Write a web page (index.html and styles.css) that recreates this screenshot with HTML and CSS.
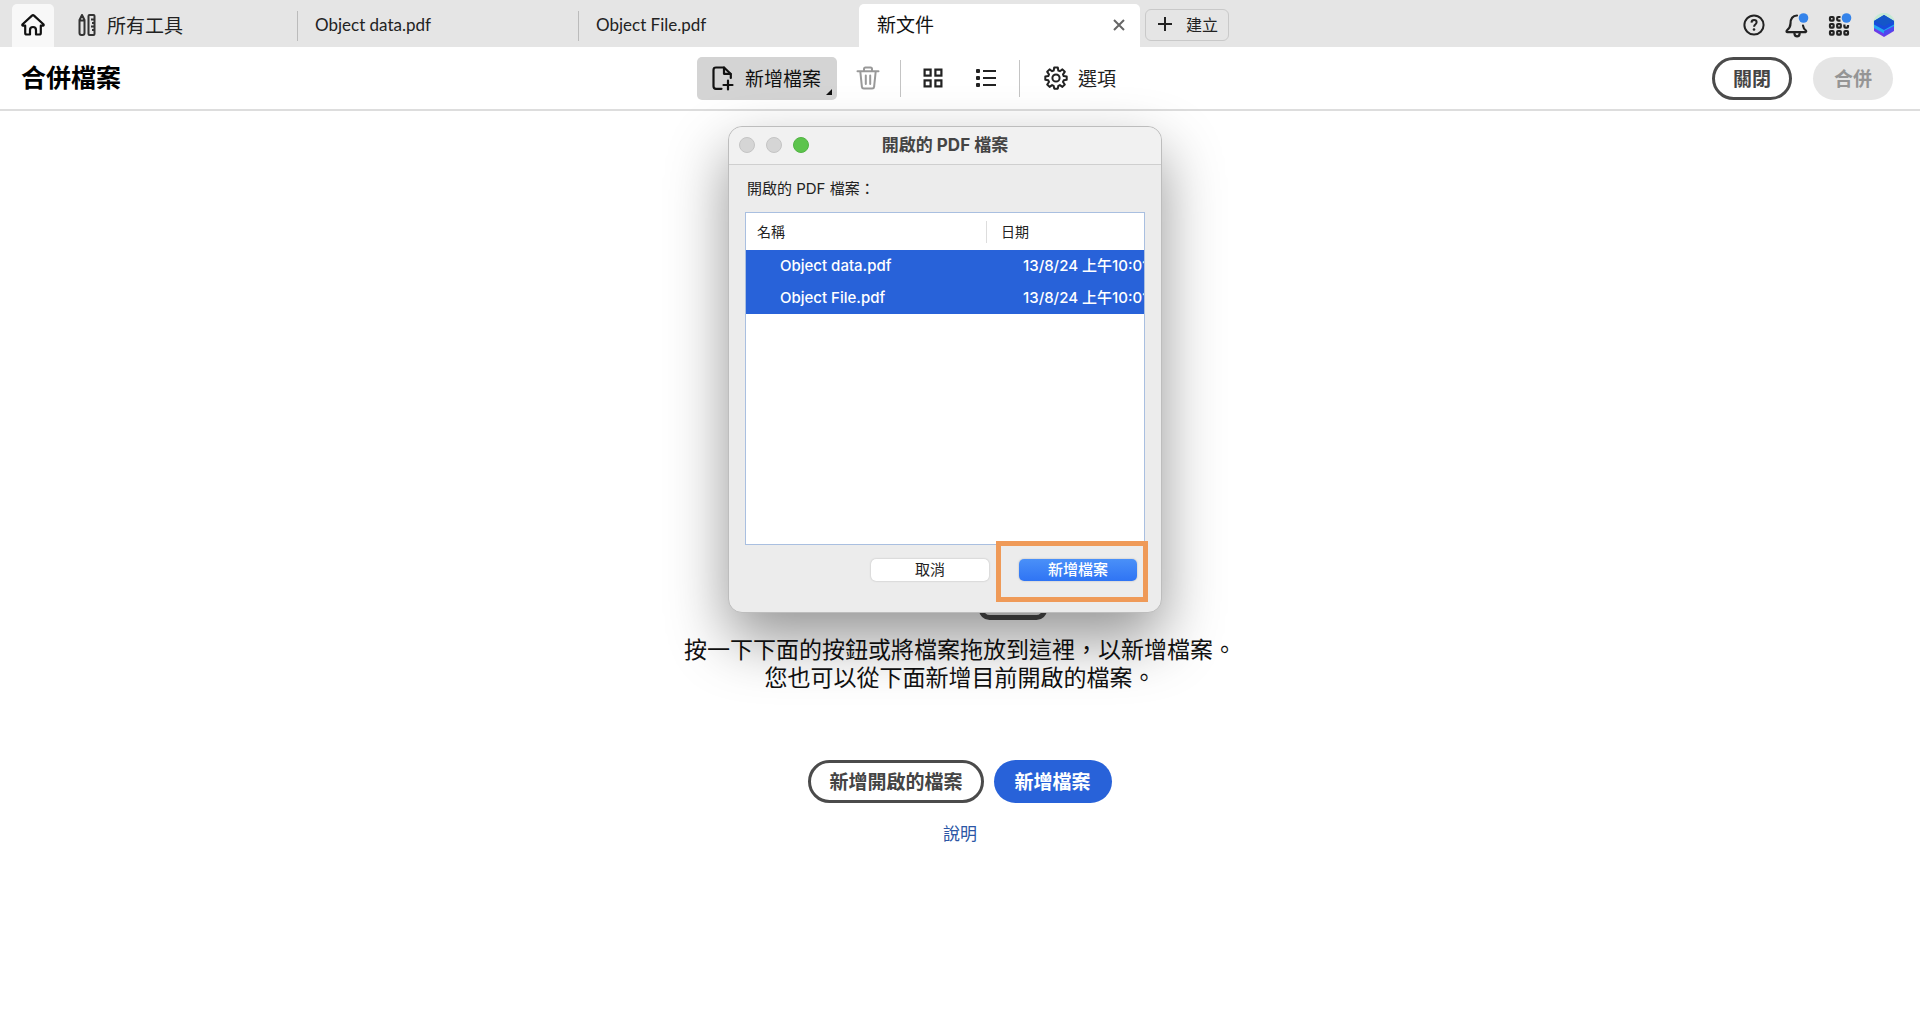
FILE: index.html
```
<!DOCTYPE html>
<html lang="zh-Hant">
<head>
	<meta charset="utf-8">
	<title>合併檔案</title>
	<link rel="stylesheet" href="styles.css">
</head>
<body>

<header class="tabbar">
	<div class="tabbar-left">
		<button class="home" aria-label="首頁">
			<svg width="24" height="24" viewBox="0 0 24 24" fill="none" stroke="#111" stroke-width="2.2" stroke-linejoin="round" stroke-linecap="round"><path d="M1.6 11.3 11 2.6q1-.9 2 0l9.400 8.700q.8 1-.4 1.400H19.800V20q0 1.500-1.500 1.500H15V17q0-3-3-3t-3 3v4.500H5.700Q4.200 21.500 4.200 20v-7.300H2q-1.200-.4-.4-1.400Z"/></svg>
		</button>
		<button class="all-tools">
			<svg width="18" height="22" viewBox="0 0 18 22" fill="none" stroke="#333" stroke-width="2" stroke-linejoin="round"><path d="M1.500 6 4 1l2.500 5v13q0 2-2 2h-1q-2 0-2-2ZM1.500 6.500h5M11.500 1h4q1 0 1 1v18q0 1-1 1h-4q-1 0-1-1V2q0-1 1-1ZM13 5.500h3.500M14 9h2.500M13 12.500h3.500M14 16h2.500"/></svg>
			所有工具
		</button>
	</div>
	<nav class="tabs">
		<button class="tab">Object data.pdf</button>
		<button class="tab">Object File.pdf</button>
		<div class="tab active">新文件
			<button class="close" aria-label="關閉索引標籤">
				<svg width="12" height="12" viewBox="0 0 12 12" stroke="#666" stroke-width="2"><path d="M1 1l10 10M11 1 1 11"/></svg>
			</button>
		</div>
	</nav>
	<button class="create">
		<svg width="14" height="14" viewBox="0 0 14 14" stroke="#222" stroke-width="2"><path d="M7 0v14M0 7h14"/></svg>
		建立
	</button>
	<div class="account">
		<button aria-label="說明">
			<svg width="24" height="24" viewBox="0 0 24 24" fill="none" stroke="#222" stroke-width="2"><circle cx="12" cy="12" r="9.600"/><path d="M9.500 9.600q.1-2.500 2.600-2.500t2.500 2.200q0 1.200-1.300 2.200-1.200.9-1.200 2.200"/><circle cx="12" cy="16.500" r="1.300" fill="#222" stroke="none"/></svg>
		</button>
		<button aria-label="通知">
			<svg width="24" height="26" viewBox="0 0 24 26" fill="none" stroke="#222" stroke-width="2.200" stroke-linecap="round" stroke-linejoin="round"><path d="M12 3.500Q5.500 4 5.500 11.500q0 4-3.700 7-.8 1.600.7 1.600h18q1.200-.4.400-1.600-2.600-2-2.900-5M9.500 20.500v1.500q.4 2.300 2.600 2.300t2.500-2.300v-1.500"/><circle cx="18.500" cy="6" r="4.800" fill="#3483ea" stroke="none"/></svg>
		</button>
		<button aria-label="應用程式">
			<svg width="24" height="26" viewBox="0 0 24 26" fill="none" stroke="#222" stroke-width="2.200"><rect x="2" y="5" width="3.600" height="3.600" rx=".8"/><path d="M12.500 5h-2.300q-1 0-1 1v1.600q0 1 1 1h2.300"/><rect x="2" y="12" width="3.600" height="3.600" rx=".8"/><rect x="9.200" y="12" width="3.600" height="3.600" rx=".8"/><path d="M16.400 12.500v2q0 1.100 1.100 1.100H19q1 0 1-1.100v-1.500"/><rect x="2" y="19" width="3.600" height="3.600" rx=".8"/><rect x="9.200" y="19" width="3.600" height="3.600" rx=".8"/><rect x="16.400" y="19" width="3.600" height="3.600" rx=".8"/><circle cx="18.500" cy="6" r="4.800" fill="#3483ea" stroke="none"/></svg>
		</button>
		<button aria-label="帳戶">
			<svg width="26" height="26" viewBox="0 0 26 26"><circle cx="13" cy="12" r="11" fill="#a9efc4" opacity=".55"/><path d="M3 14v5l10 6 10-6v-5l-10 5Z" fill="#6c3be8"/><path d="M3 11v5l10 5.500L23 16v-5l-10 5Z" fill="#22a7f2"/><path d="M13 3 23 9v3.500L13 18 3 12.500V9Z" fill="#174bdc"/><path d="M13 3 23 9l-10 5.500L3 9Z" fill="#1456c9"/><path d="m13 19 10-5v4l-10 6Z" fill="#4c48ef"/></svg>
		</button>
	</div>
</header>

<div class="toolbar">
	<h1>合併檔案</h1>
	<div class="tools">
		<button class="add-files">
			<svg width="22" height="25" viewBox="0 0 22 25" fill="none" stroke="#111" stroke-width="2.200" stroke-linejoin="round" stroke-linecap="round"><path d="M9.500 22.800H4q-2.500 0-2.500-2.500V4Q1.500 1.500 4 1.500h8L18.800 8v4"/><path d="M12 1.500v6.300h6.500M16 14.500v9M11.500 19h9"/></svg>
			新增檔案
			<span class="corner"></span>
		</button>
		<button class="icon-btn trash" aria-label="刪除">
			<svg width="24" height="24" viewBox="0 0 24 24" fill="none" stroke="#999" stroke-width="2" stroke-linejoin="round" stroke-linecap="round"><path d="M1.500 5.200h21M8 5V3q0-1.500 1.500-1.500h5Q16 1.500 16 3v2M4.300 5.500l1.600 15.300q.2 1.700 1.900 1.700h8.400q1.700 0 1.900-1.700l1.600-15.300M9.800 9.500v8.500M14.200 9.500v8.500"/></svg>
		</button>
		<span class="divider"></span>
		<button class="icon-btn" aria-label="縮圖檢視">
			<svg width="20" height="20" viewBox="0 0 20 20" fill="none" stroke="#222" stroke-width="2.200"><rect x="1.600" y="1.600" width="6" height="6"/><rect x="12.400" y="1.600" width="6" height="6"/><rect x="1.600" y="12.400" width="6" height="6"/><rect x="12.400" y="12.400" width="6" height="6"/></svg>
		</button>
		<button class="icon-btn list" aria-label="清單檢視">
			<svg width="20" height="20" viewBox="0 0 20 20" fill="#222"><rect y="1" width="4" height="4" rx="1"/><rect y="8" width="4" height="4" rx="1"/><rect y="15" width="4" height="4" rx="1"/><path d="M7 2h13v2H7zM7 9h13v2H7zM7 16h13v2H7z"/></svg>
		</button>
		<span class="divider"></span>
		<button class="options">
			<svg width="24" height="24" viewBox="0 0 24 24" fill="none" stroke="#222" stroke-width="2" stroke-linejoin="round"><path d="M10.200 1.500h3.600l.5 3 1.600.7 2.500-1.800 2.400 2.400-1.800 2.500.7 1.700 3 .4v3.400l-3 .5-.7 1.700 1.800 2.500-2.400 2.400-2.500-1.800-1.600.7-.5 2.900h-3.600l-.5-2.900-1.600-.7-2.500 1.800-2.400-2.400L5 16l-.7-1.700-3-.5v-3.400l3-.4L5 8.300 3.200 5.800l2.400-2.400 2.500 1.800 1.600-.7Z"/><circle cx="12" cy="12" r="3.600"/></svg>
			選項
		</button>
	</div>
	<div class="actions">
		<button class="pill outline">關閉</button>
		<button class="pill" disabled>合併</button>
	</div>
</div>

<main class="empty">
	<svg class="art" width="68" height="80" viewBox="0 0 68 80" fill="#f5f5f5" stroke="#4b4b4b" stroke-width="5"><rect x="2.500" y="2.500" width="63" height="75" rx="8"/></svg>
	<p>按一下下面的按鈕或將檔案拖放到這裡，以新增檔案。<br>您也可以從下面新增目前開啟的檔案。</p>
	<div class="choices">
		<button class="pill outline">新增開啟的檔案</button>
		<button class="pill primary">新增檔案</button>
	</div>
	<a href="#">說明</a>
</main>

<section class="dialog" role="dialog" aria-labelledby="dialog-title">
	<div class="titlebar">
		<div class="lights"><i></i><i></i><i class="green"></i></div>
		<h2 id="dialog-title">開啟的 PDF 檔案</h2>
	</div>
	<div class="dialog-body">
		<p id="list-label">開啟的 PDF 檔案：</p>
		<div class="list-box">
			<table aria-labelledby="list-label">
				<thead>
					<tr><th>名稱</th><th><span>日期</span></th></tr>
				</thead>
				<tbody>
					<tr><td>Object data.pdf</td><td>13/8/24 上午10:01</td></tr>
					<tr><td>Object File.pdf</td><td>13/8/24 上午10:01</td></tr>
				</tbody>
			</table>
		</div>
		<div class="dialog-buttons">
			<button>取消</button>
			<button class="default">新增檔案</button>
		</div>
	</div>
	<div class="highlight"></div>
</section>

</body>
</html>
```
FILE: styles.css
```
*{
	box-sizing: border-box;
}
body{
	margin: 0;
	min-height: 100vh;
	position: relative;
	background: white;
	color: #222;
	font-family: "Noto Sans CJK TC", sans-serif;
	font-size: 19px;
	line-height: 28px;
}
button{
	border: none;
	background: none;
	padding: 0;
	margin: 0;
	color: inherit;
	font: inherit;
	white-space: nowrap;
}
svg{
	display: block;
	flex: none;
}
h1, h2, p{
	margin: 0;
}

/* tabs along the top */
.tabbar{
	display: flex;
	height: 47px;
	padding-top: 4px;
	background: #e5e5e5;
}
.tabbar-left{
	display: flex;
	width: 297px;
	padding-left: 12px;
}
.home{
	width: 42px;
	padding-bottom: 2px;
	display: flex;
	align-items: center;
	justify-content: center;
	background: #f8f8f8;
	border-radius: 5px 5px 0 0;
}
.all-tools{
	display: flex;
	align-items: center;
	gap: 11px;
	margin-left: 24px;
	padding-bottom: 2px;
}
.tabs{
	display: flex;
}
.tab{
	width: 281px;
	padding: 0 18px 2px;
	display: flex;
	align-items: center;
	font-family: Lato, "Noto Sans CJK TC", sans-serif;
	font-size: 17px;
	position: relative;
}
.tab::before{
	content: "";
	position: absolute;
	left: 0;
	top: 7px;
	height: 30px;
	width: 1px;
	background: #bbb;
}
.tab.active{
	justify-content: space-between;
	background: white;
	color: #111;
	border-radius: 5px 5px 0 0;
	padding-right: 15px;
	font-size: 19px;
}
.tab.active::before{
	display: none;
}
.create{
	display: flex;
	align-items: center;
	gap: 14px;
	align-self: flex-start;
	height: 32px;
	margin: 5px 0 0 5px;
	padding: 0 10px 2px 12px;
	border: 1px solid #c9c9c9;
	border-radius: 6px;
	font-size: 16px;
}
.account{
	display: flex;
	align-items: center;
	gap: 19px;
	margin-left: auto;
	padding: 0 23px 2px 0;
}

/* toolbar */
.toolbar{
	display: grid;
	grid-template-columns: 1fr auto 1fr;
	align-items: center;
	height: 64px;
	border-bottom: 2px solid #ddd;
}
.toolbar h1{
	padding: 0 0 4px 21px;
	font-size: 25px;
	color: black;
}
.tools{
	display: flex;
	align-items: center;
	min-width: 526px;
}
.add-files{
	position: relative;
	display: flex;
	align-items: center;
	gap: 11px;
	height: 43px;
	padding: 0 16px 0 15px;
	background: #d4d4d4;
	border-radius: 5px;
	color: #111;
}
.corner{
	position: absolute;
	right: 5px;
	bottom: 5px;
	border: 3px solid;
	border-color: transparent #111 #111 transparent;
}
.icon-btn{
	width: 48px;
	display: flex;
	justify-content: center;
}
.trash{
	margin: 0 8px 0 7px;
}
.divider{
	width: 1px;
	height: 37px;
	background: #c4c4c4;
}
.divider + .icon-btn{
	margin-left: 8px;
}
.list{
	margin-left: 5px;
	margin-right: 9px;
}
.options{
	display: flex;
	align-items: center;
	gap: 10px;
	margin-left: 24px;
}
.actions{
	display: flex;
	justify-content: flex-end;
	gap: 21px;
	padding-right: 27px;
}
.pill{
	height: 43px;
	padding: 0 21px 1px;
	border-radius: 22px;
	font-weight: 700;
}
.pill.outline{
	border: 3px solid #4b4b4b;
	padding: 0 18px 1px;
	color: #444;
}
.pill:disabled{
	background: #e5e5e5;
	color: #959595;
}
.pill.primary{
	background: #2862d9;
	color: white;
}

/* empty drop area */
.empty{
	display: flex;
	flex-direction: column;
	align-items: center;
	padding-top: 429px;
}
.art{
	margin-left: 106px;
}
.empty p{
	margin-top: 14px;
	font-size: 23px;
	line-height: 28px;
	text-align: center;
	color: #111;
}
.choices{
	display: flex;
	gap: 10px;
	margin-top: 70px;
}
.empty a{
	margin-top: 16px;
	font-size: 17px;
	color: #2b56a5;
	text-decoration: none;
}

/* floating window */
.dialog{
	position: absolute;
	top: 126px;
	left: calc(50% - 232px);
	width: 434px;
	background: #ececec;
	border: 1px solid #bdbdbd;
	border-radius: 14px;
	box-shadow: 0 26px 60px rgba(0, 0, 0, .42);
	font-family: Inter, "Noto Sans CJK TC", sans-serif;
	font-size: 15px;
}
.titlebar{
	display: grid;
	grid-template-columns: 1fr auto 1fr;
	align-items: center;
	height: 38px;
	padding: 0 10px 2px;
	background: #f1f1f1;
	border-bottom: 1px solid #cfcfcf;
	border-radius: 14px 14px 0 0;
}
.titlebar h2{
	font-size: 17px;
	color: #444;
}
.lights{
	display: flex;
	gap: 11px;
}
.lights i{
	width: 16px;
	height: 16px;
	border-radius: 50%;
	background: #d5d5d5;
	border: 1px solid #c4c4c4;
}
.lights .green{
	background: #5cc44c;
	border-color: #52b344;
}
.dialog-body{
	padding: 10px 16px 31px;
}
.list-box{
	height: 333px;
	margin-top: 9px;
	overflow: hidden;
	background: white;
	border: 1px solid #a9bfe0;
}
table{
	width: 100%;
	table-layout: fixed;
	border-collapse: collapse;
}
th{
	height: 37px;
	padding: 0 0 0 11px;
	font-weight: 400;
	font-size: 14px;
	text-align: left;
}
th:first-child{
	width: 240px;
}
th:last-child{
	padding: 0;
}
th span{
	display: block;
	padding-left: 14px;
	line-height: 22px;
	border-left: 1px solid #ddd;
}
td{
	height: 32px;
	padding: 0 0 0 34px;
	background: #2862d9;
	color: white;
	font-size: 15px;
	font-weight: 500;
	white-space: nowrap;
	overflow: hidden;
}
td:last-child{
	padding-left: 37px;
}
#list-label{
	padding-left: 2px;
}
.dialog-buttons{
	display: flex;
	justify-content: flex-end;
	gap: 30px;
	padding: 14px 8px 0 0;
}
.dialog-buttons button{
	width: 118px;
	height: 22px;
	line-height: 22px;
	background: white;
	border-radius: 5px;
	box-shadow: 0 0 2px rgba(0, 0, 0, .25);
}
.dialog-buttons .default{
	background: linear-gradient(#4a90f8, #2f74f4);
	color: white;
	font-weight: 500;
}
.highlight{
	position: absolute;
	right: 13px;
	bottom: 10px;
	width: 152px;
	height: 61px;
	border: 5px solid #ef9a58;
	pointer-events: none;
}
```
